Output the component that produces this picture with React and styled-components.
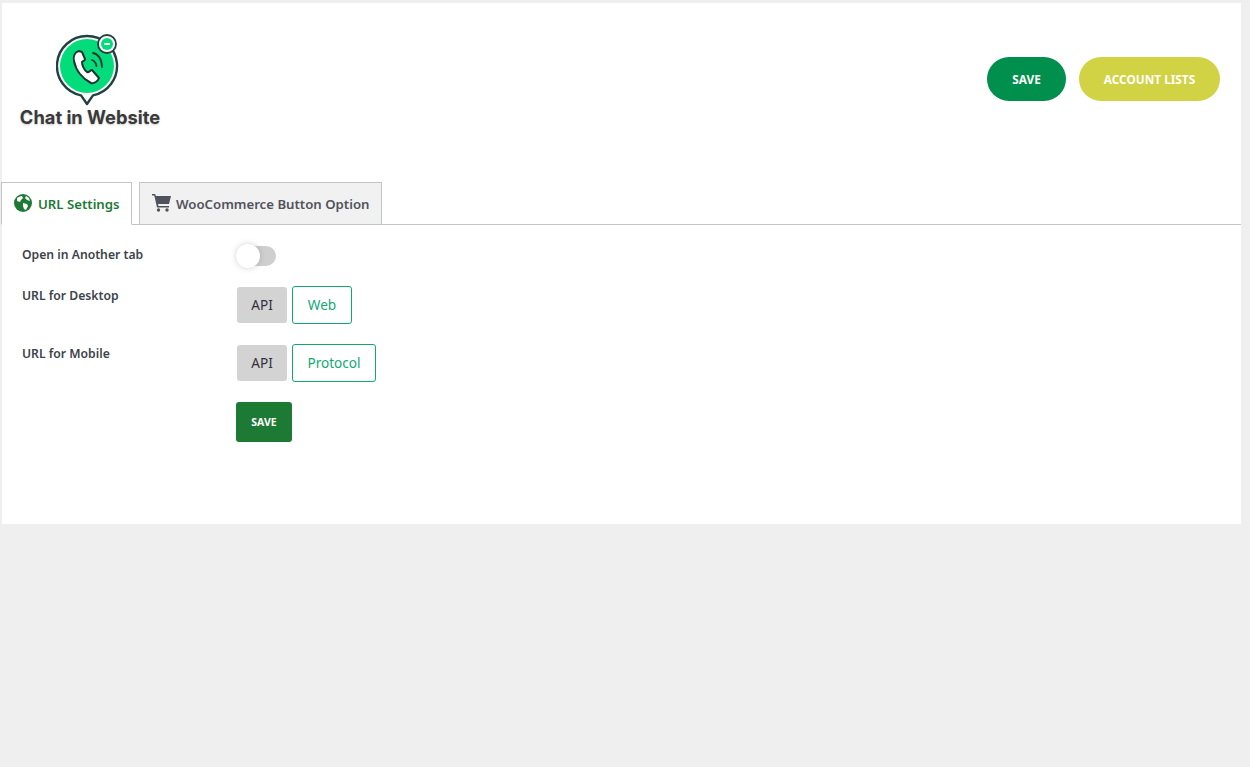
import React from "react";
import styled, { createGlobalStyle } from "styled-components";

const GlobalStyle = createGlobalStyle`
  html, body {
    margin: 0;
    padding: 0;
    background: #efefef;
    font-family: "Noto Sans", "Open Sans", sans-serif;
  }
`;

const Panel = styled.div`
  margin: 3px 9px 0 2px;
  height: 521px;
  background: #fff;
  box-sizing: border-box;
`;

const Header = styled.header`
  height: 179px;
  box-sizing: border-box;
  padding: 30px 21px 0 18px;
  display: flex;
  justify-content: space-between;
  align-items: flex-start;
`;

const Brand = styled.div`
  width: 142px;
  display: flex;
  flex-direction: column;
  align-items: center;
`;

const LogoMark = styled.svg`
  align-self: flex-start;
  margin-left: 36px;
  flex-shrink: 0;
`;

const BrandName = styled.div`
  margin: -3px 2px 0 0;
  font-family: "Inter", sans-serif;
  font-weight: 700;
  font-size: 18.3px;
  line-height: 22px;
  white-space: nowrap;
  color: #3a3a3a;
  text-shadow: 0 1px 2px rgba(0, 0, 0, 0.2);
`;

const Actions = styled.div`
  display: flex;
  gap: 13px;
  margin-top: 24px;
`;

const PillButton = styled.button`
  height: 44px;
  width: ${(p) => p.$width}px;
  padding: 0;
  border: 0;
  border-radius: 22px;
  background: ${(p) => p.$bg};
  color: #fff;
  font-family: inherit;
  font-size: 11.8px;
  font-weight: 700;
  text-transform: uppercase;
`;

const TabBar = styled.nav`
  display: flex;
  align-items: flex-end;
  gap: 7px;
  height: 43px;
  box-sizing: border-box;
  margin-left: -1px;
  border-bottom: 1px solid #c3c4c7;
`;

const Tab = styled.div`
  height: ${(p) => (p.$active ? 43 : 42)}px;
  box-sizing: border-box;
  display: flex;
  align-items: center;
  gap: ${(p) => (p.$active ? 6 : 5)}px;
  padding: 0 12px;
  width: ${(p) => p.$width}px;
  border: 1px solid #c3c4c7;
  border-bottom: ${(p) => (p.$active ? "1px solid #fff" : "0")};
  background: ${(p) => (p.$active ? "#fff" : "#f1f1f1")};
  color: ${(p) => (p.$active ? "#1d7a35" : "#50535b")};
  font-size: 13.2px;
  font-weight: 600;
  white-space: nowrap;
  margin-bottom: ${(p) => (p.$active ? "-1px" : "0")};

  svg {
    flex-shrink: 0;
    margin-top: -2px;
  }
`;

const Form = styled.div`
  padding: 20px 0 0 20px;
`;

const Row = styled.div`
  display: grid;
  grid-template-columns: 214px 1fr;
  height: ${(p) => p.$height}px;
`;

const Label = styled.div`
  font-size: 12.2px;
  font-weight: 600;
  line-height: 20px;
  color: #3c434a;
`;

const Switch = styled.div`
  position: relative;
  width: 40px;
  height: 20px;
  margin-top: 1px;
  border-radius: 10px;
  background: #cfcfcf;
`;

const Knob = styled.span`
  position: absolute;
  left: 0;
  top: -2px;
  width: 24px;
  height: 24px;
  border-radius: 50%;
  background: #fff;
  box-shadow: 0 0 6px rgba(0, 0, 0, 0.18);
`;

const Choices = styled.div`
  display: flex;
  align-items: center;
  gap: 5px;
  padding-left: 1px;
  height: 38px;
`;

const Choice = styled.div`
  box-sizing: border-box;
  display: flex;
  align-items: center;
  justify-content: center;
  border-radius: 3px;
  padding-bottom: 2px;
  font-size: 13.6px;
  width: ${(p) => p.$width}px;
  height: ${(p) => (p.$selected ? 38 : 36)}px;
  background: ${(p) => (p.$selected ? "#fff" : "#d3d3d3")};
  color: ${(p) => (p.$selected ? "#13a875" : "#32303c")};
  border: ${(p) => (p.$selected ? "1px solid #13a86b" : "0")};
`;

const SaveButton = styled.button`
  width: 56px;
  height: 40px;
  padding: 0;
  border: 0;
  border-radius: 3px;
  background: #1d7a35;
  color: #fff;
  font-family: inherit;
  font-size: 10.5px;
  font-weight: 700;
  text-transform: uppercase;
`;

const Logo = () => (
  <LogoMark width="64" height="76" viewBox="0 0 64 76">
    <path
      d="M31 3a30 30 0 0 1 6 59.4L31 71l-6-8.6A30 30 0 0 1 31 3z"
      fill="#fff"
      stroke="#22403f"
      strokeWidth="2.4"
      strokeLinejoin="round"
    />
    <circle cx="31" cy="33" r="27" fill="#03dc7a" />
    <path
      d="M23 18C19 19 17 23 18 28 20 38 27 46 35 50 38 51 42 48 43 45L36 37C34 37 33 40 31 39 28 37 26 32 26 29 27 28 29 28 29 26L26 19Z"
      fill="#fff"
      stroke="#1f3533"
      strokeWidth="2"
      strokeLinejoin="round"
    />
    <path d="M36 27c3 1 4 3 4.5 6M37 20c5 1 9 6 9 14" fill="none" stroke="#1f3533" strokeWidth="1.8" strokeLinecap="round" />
    <circle cx="51" cy="11" r="9" fill="#fff" stroke="#22403f" strokeWidth="1.8" />
    <circle cx="51" cy="11" r="6" fill="#03dc7a" />
    <rect x="48" y="10" width="6" height="2" rx="1" fill="#fff" />
  </LogoMark>
);

const Globe = () => (
  <svg width="18" height="18" viewBox="0 0 18 18">
    <circle cx="9" cy="9" r="9" fill="#1d7a35" />
    <path
      d="M3 4c2-1 3-2 5-2l1 2-2 2-1 2-3-1zM9 9l4 1 1 2-2 4-2-1-1-3zM12 2l3 2 1 3-3-1-2-2z"
      fill="#fff"
    />
  </svg>
);

const Cart = () => (
  <svg width="19" height="19" viewBox="0 0 19 19">
    <path d="M0 1h3l1 2h15l-2 8H6l.5 2H17v1.6H5L2.3 2.6H0z" fill="#50535b" />
    <circle cx="6.5" cy="17" r="1.7" fill="#50535b" />
    <circle cx="15" cy="17" r="1.7" fill="#50535b" />
  </svg>
);

const App = () => (
  <>
    <GlobalStyle />
    <Panel>
      <Header>
        <Brand>
          <Logo />
          <BrandName>Chat in Website</BrandName>
        </Brand>
        <Actions>
          <PillButton $bg="#008f4c" $width={79}>Save</PillButton>
          <PillButton $bg="#d1d244" $width={141}>Account Lists</PillButton>
        </Actions>
      </Header>
      <TabBar>
        <Tab $active $width={131}>
          <Globe />
          URL Settings
        </Tab>
        <Tab $width={243}>
          <Cart />
          WooCommerce Button Option
        </Tab>
      </TabBar>
      <Form>
        <Row $height={41}>
          <Label>Open in Another tab</Label>
          <Switch>
            <Knob />
          </Switch>
        </Row>
        <Row $height={58}>
          <Label>URL for Desktop</Label>
          <Choices>
            <Choice $width={50}>API</Choice>
            <Choice $selected $width={60}>Web</Choice>
          </Choices>
        </Row>
        <Row $height={58}>
          <Label>URL for Mobile</Label>
          <Choices>
            <Choice $width={50}>API</Choice>
            <Choice $selected $width={84}>Protocol</Choice>
          </Choices>
        </Row>
        <Row $height={40}>
          <span />
          <SaveButton>Save</SaveButton>
        </Row>
      </Form>
    </Panel>
  </>
);

export default App;
